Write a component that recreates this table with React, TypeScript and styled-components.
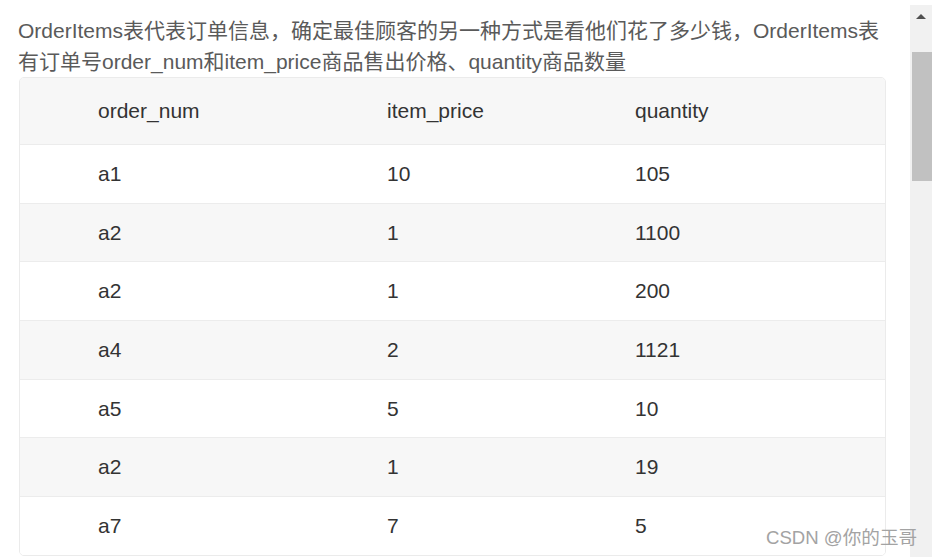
import React from "react";
import styled, { createGlobalStyle } from "styled-components";

const GlobalStyle = createGlobalStyle`
  html, body {
    margin: 0;
    padding: 0;
    background: #fff;
    overflow: hidden;
  }
  body {
    font-family: "Liberation Sans", "Noto Sans CJK SC", Arial, sans-serif;
  }
`;

const rows = [
  { order: "a1", price: "10", qty: "105" },
  { order: "a2", price: "1", qty: "1100" },
  { order: "a2", price: "1", qty: "200" },
  { order: "a4", price: "2", qty: "1121" },
  { order: "a5", price: "5", qty: "10" },
  { order: "a2", price: "1", qty: "19" },
  { order: "a7", price: "7", qty: "5" },
];

function App() {
  return (
    <>
      <GlobalStyle />
      <Page>
        <Content>
          <Intro>
            OrderItems表代表订单信息，确定最佳顾客的另一种方式是看他们花了多少钱，OrderItems表有订单号order_num和item_price商品售出价格、quantity商品数量
          </Intro>
          <TableWrapper>
            <Table>
              <colgroup>
                <col style={{ width: 289 }} />
                <col style={{ width: 248 }} />
                <col />
              </colgroup>
              <thead>
                <Row $striped>
                  <HeadCell>order_num</HeadCell>
                  <HeadCell>item_price</HeadCell>
                  <HeadCell>quantity</HeadCell>
                </Row>
              </thead>
              <tbody>
                {rows.map((r, i) => (
                  <Row key={i} $striped={i % 2 === 1}>
                    <Cell>{r.order}</Cell>
                    <Cell>{r.price}</Cell>
                    <Cell>{r.qty}</Cell>
                  </Row>
                ))}
              </tbody>
            </Table>
          </TableWrapper>
        </Content>

        <Scrollbar>
          <ArrowUp />
          <Thumb />
        </Scrollbar>

        <Watermark>CSDN @你的玉哥</Watermark>
      </Page>
    </>
  );
}

const Page = styled.div`
  position: relative;
  width: 932px;
  height: 557px;
  overflow: hidden;
  display: flex;
`;

const Content = styled.div`
  width: 867px;
  padding: 15px 0 0 19px;
`;

const Intro = styled.p`
  margin: 0 0 0 -1px;
  font-size: 21px;
  line-height: 31px;
  color: #5a5a5a;
`;

const TableWrapper = styled.div`
  border: 1px solid #ebebeb;
  border-radius: 5px;
  overflow: hidden;
`;

const Table = styled.table`
  width: 100%;
  border-collapse: collapse;
  table-layout: fixed;
`;

const Row = styled.tr<{ $striped?: boolean }>`
  background: ${(p) => (p.$striped ? "#f7f7f7" : "#ffffff")};
  border-top: 1px solid #ececec;

  thead & {
    border-top: none;
  }
`;

const HeadCell = styled.th`
  height: 66px;
  padding: 0 0 0 78px;
  text-align: left;
  font-weight: 400;
  font-size: 21px;
  color: #333;
`;

const Cell = styled.td`
  height: 57.7px;
  padding: 0 0 0 78px;
  font-size: 21px;
  color: #333;
`;

const Scrollbar = styled.div`
  position: absolute;
  top: 5px;
  right: 0;
  width: 22px;
  height: 552px;
  background: #f1f1f1;
`;

const ArrowUp = styled.div`
  position: absolute;
  top: 9px;
  left: 6px;
  width: 0;
  height: 0;
  border-left: 5px solid transparent;
  border-right: 5px solid transparent;
  border-bottom: 5px solid #505050;
`;

const Thumb = styled.div`
  position: absolute;
  top: 47px;
  left: 2px;
  right: 0;
  height: 129px;
  background: #c1c1c1;
`;

const Watermark = styled.div`
  position: absolute;
  left: 766px;
  top: 526px;
  font-size: 18.6px;
  line-height: 24px;
  color: #a3a3a3;
  white-space: nowrap;
`;

export default App;
